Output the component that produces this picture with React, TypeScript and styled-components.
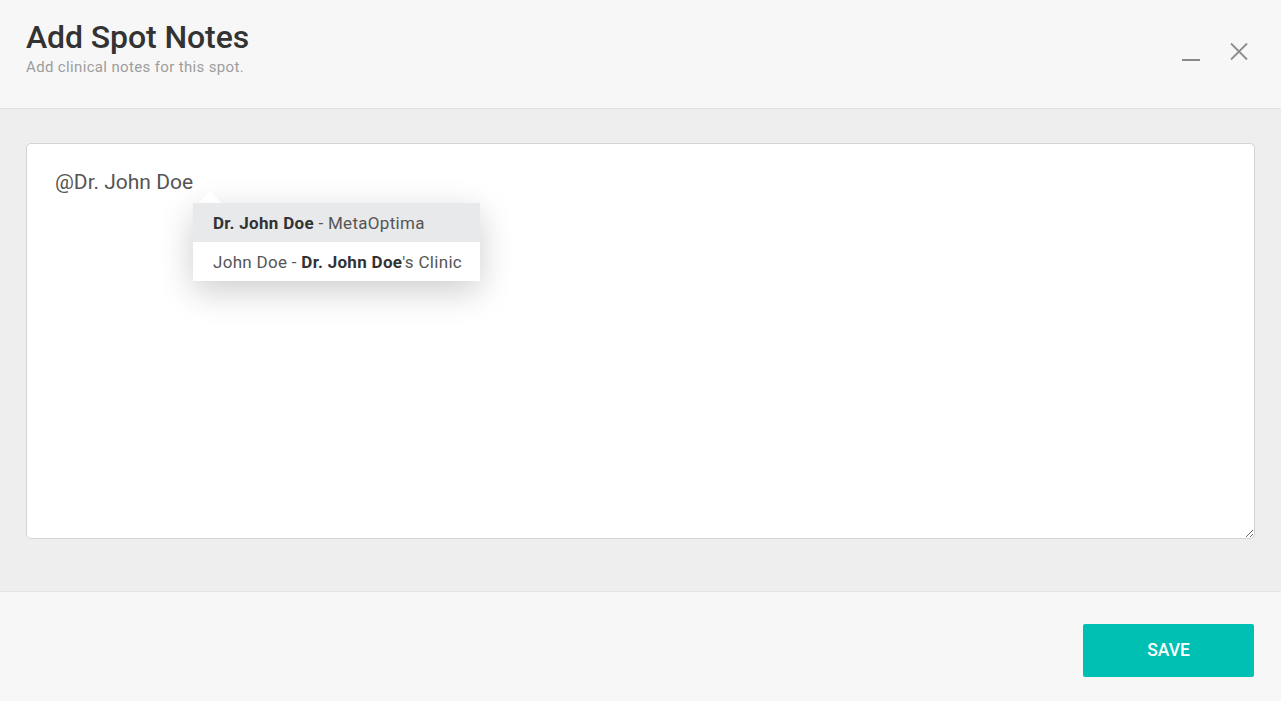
import React from "react";
import styled, { createGlobalStyle } from "styled-components";

const GlobalStyle = createGlobalStyle`
  html, body {
    margin: 0;
    padding: 0;
    height: 100%;
    background: #eeeeee;
    font-family: Roboto, "Liberation Sans", sans-serif;
  }
  #root {
    height: 100%;
  }
`;

interface IMention {
  key: string;
  parts: { text: string; bold?: boolean }[];
}

const mentions: IMention[] = [
  {
    key: "metaoptima",
    parts: [{ text: "Dr. John Doe", bold: true }, { text: " - MetaOptima" }],
  },
  {
    key: "clinic",
    parts: [
      { text: "John Doe - " },
      { text: "Dr. John Doe", bold: true },
      { text: "'s Clinic" },
    ],
  },
];

const App: React.FC = () => {
  return (
    <>
      <GlobalStyle />
      <Modal>
        <Header>
          <div>
            <Title>Add Spot Notes</Title>
            <Subtitle>Add clinical notes for this spot.</Subtitle>
          </div>
          <HeaderActions>
            <IconButton aria-label="minimize">
              <svg width="20" height="20" viewBox="0 0 20 20">
                <line x1="1" y1="18" x2="19" y2="18" stroke="#8a8a8a" strokeWidth="2" />
              </svg>
            </IconButton>
            <IconButton aria-label="close">
              <svg width="20" height="20" viewBox="0 0 20 20">
                <path d="M2 1.5 L18 17.5 M18 1.5 L2 17.5" stroke="#8d8d8d" strokeWidth="1.8" />
              </svg>
            </IconButton>
          </HeaderActions>
        </Header>
        <Body>
          <NoteField>
            <NoteInput defaultValue="@Dr. John Doe" spellCheck={false} />
            <MentionMenu>
              {mentions.map((m, index) => (
                <MentionItem key={m.key} active={index === 0}>
                  {m.parts.map((p, i) =>
                    p.bold ? <b key={i}>{p.text}</b> : <span key={i}>{p.text}</span>
                  )}
                </MentionItem>
              ))}
            </MentionMenu>
          </NoteField>
        </Body>
        <Footer>
          <SaveButton>SAVE</SaveButton>
        </Footer>
      </Modal>
    </>
  );
};

export default App;

const Modal = styled.div`
  display: flex;
  flex-direction: column;
  height: 701px;
  background: #eeeeee;
`;

const Header = styled.div`
  display: flex;
  justify-content: space-between;
  align-items: flex-start;
  height: 109px;
  box-sizing: border-box;
  padding: 18px 32px 0 26px;
  background: #f7f7f7;
  border-bottom: 1px solid #e2e2e2;
`;

const Title = styled.h1`
  margin: 0;
  font-size: 32px;
  line-height: 38px;
  font-weight: 500;
  color: #333333;
  letter-spacing: -0.1px;
`;

const Subtitle = styled.div`
  font-size: 15px;
  line-height: 18px;
  color: #9d9d9d;
  letter-spacing: 0.35px;
  margin-top: 2px;
`;

const HeaderActions = styled.div`
  display: flex;
  gap: 10px;
  margin-top: 24px;
`;

const IconButton = styled.button`
  display: flex;
  align-items: center;
  justify-content: center;
  width: 20px;
  height: 20px;
  padding: 0;
  margin-left: 18px;
  border: none;
  background: none;
  cursor: pointer;
`;

const Body = styled.div`
  flex: 0 0 auto;
  height: 482px;
  box-sizing: border-box;
  padding: 34px 26px 0 26px;
`;

const NoteField = styled.div`
  position: relative;
`;

const NoteInput = styled.textarea`
  display: block;
  width: 100%;
  height: 396px;
  box-sizing: border-box;
  padding: 24px 28px;
  border: 1px solid #d4d4d4;
  border-radius: 5px;
  background: #ffffff;
  font-family: Roboto, "Liberation Sans", sans-serif;
  font-size: 21px;
  line-height: 28px;
  color: #555555;
  outline: none;
  resize: both;
`;

const MentionMenu = styled.div`
  position: absolute;
  left: 167px;
  top: 60px;
  width: 287px;
  background: #ffffff;
  box-shadow: 0 10px 34px rgba(0, 0, 0, 0.2);
  &::before {
    content: "";
    position: absolute;
    left: 6px;
    top: -12px;
    border-left: 11px solid transparent;
    border-right: 11px solid transparent;
    border-bottom: 12px solid #ffffff;
  }
`;

const MentionItem = styled.div<{ active?: boolean }>`
  height: 39px;
  display: flex;
  align-items: center;
  padding: 0 20px;
  font-size: 17px;
  letter-spacing: 0.3px;
  color: #555555;
  background: ${(p) => (p.active ? "#e8e9eb" : "#ffffff")};
  white-space: pre;
  b {
    font-weight: 700;
    color: #333333;
  }
`;

const Footer = styled.div`
  flex: 1;
  display: flex;
  justify-content: flex-end;
  align-items: flex-start;
  padding: 32px 27px 0 0;
  background: #f7f7f7;
  border-top: 1px solid #e4e4e4;
`;

const SaveButton = styled.button`
  width: 171px;
  height: 53px;
  border: none;
  border-radius: 2px;
  background: #00bfb3;
  color: #ffffff;
  font-family: Roboto, "Liberation Sans", sans-serif;
  font-size: 17.5px;
  font-weight: 500;
  padding-bottom: 2px;
  cursor: pointer;
`;
